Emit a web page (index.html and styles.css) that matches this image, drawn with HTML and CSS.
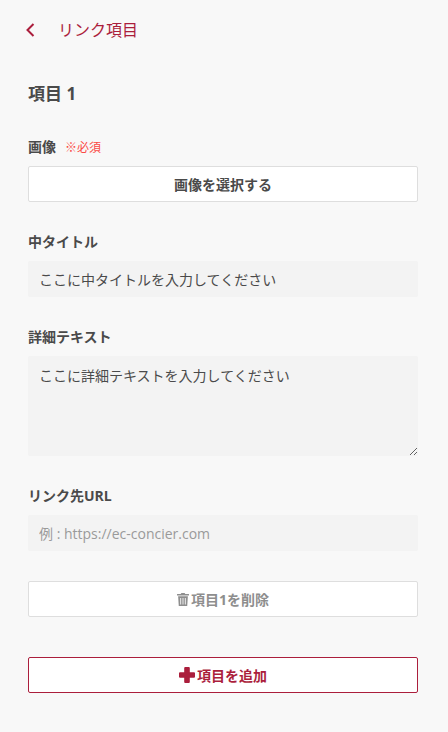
FILE: index.html
```html
<!DOCTYPE html>
<html lang="ja">
<head>
<meta charset="utf-8">
<title>リンク項目</title>
<link rel="stylesheet" href="styles.css">
</head>
<body>
<header class="topbar">
  <svg class="back" width="10" height="14" viewBox="0 0 10 14"><path d="M8.500 1 2.500 7 8.500 13" fill="none" stroke="#ab1e3c" stroke-width="2"/></svg>
  <span class="top-title">リンク項目</span>
</header>
<main class="content">
  <h2 class="item-title">項目 1</h2>
  <div class="field f-image">
    <div class="label">画像<span class="req">※必須</span></div>
    <button class="btn">画像を選択する</button>
  </div>
  <div class="field">
    <div class="label">中タイトル</div>
    <input class="input" value="ここに中タイトルを入力してください">
  </div>
  <div class="field">
    <div class="label">詳細テキスト</div>
    <textarea class="input area">ここに詳細テキストを入力してください</textarea>
  </div>
  <div class="field">
    <div class="label">リンク先URL</div>
    <input class="input" placeholder="例 : https://ec-concier.com">
  </div>
  <button class="btn del">
    <svg width="12" height="13" viewBox="0 0 11 12"><path fill="#8e8e8e" d="M4 0h3l.6 1H11v1.300H0V1h3.400zM1 3h9l-.6 9H1.600zM3 4.500v6h.8v-6zm2.100 0v6h.8v-6zm2.100 0v6h.8v-6z" fill-rule="evenodd"/></svg>
    項目1を削除
  </button>
  <button class="btn add">
    <svg width="16" height="16" viewBox="0 0 16 16"><path fill="#ab1e3c" d="M5.200 1a1 1 0 0 1 1-1h3.600a1 1 0 0 1 1 1v4.200H15a1 1 0 0 1 1 1v3.600a1 1 0 0 1-1 1h-4.200V15a1 1 0 0 1-1 1H6.200a1 1 0 0 1-1-1v-4.200H1a1 1 0 0 1-1-1V6.200a1 1 0 0 1 1-1h4.200z"/></svg>
    項目を追加
  </button>
</main>
</body>
</html>
```
FILE: styles.css
```css
* { box-sizing: border-box; }
html, body { margin: 0; padding: 0; }
body {
  width: 448px;
  height: 732px;
  overflow: hidden;
  background: #f8f8f8;
  color: #4a4a4a;
  font-family: "Open Sans", "Noto Sans CJK JP", sans-serif;
  font-size: 14px;
}
.topbar {
  display: flex;
  align-items: center;
  height: 59px;
  padding-left: 25px;
  color: #ab1e3c;
  font-size: 16px;
}
.back { margin-right: 23px; }
.top-title { line-height: 20px; }
.content { padding: 0 30px 0 28px; }
.item-title {
  margin: 25px 0 0;
  font-size: 17px;
  line-height: 20px;
  font-weight: 700;
}
.field { margin-top: 31px; }
.f-image { margin-top: 34px; }
.f-image .label { margin-bottom: 9px; }
.label {
  font-size: 14px;
  font-weight: 700;
  line-height: 18px;
  margin-bottom: 10px;
}
.req {
  margin-left: 9px;
  color: #fb4a44;
  font-size: 12px;
  font-weight: 400;
}
.btn {
  display: flex;
  align-items: center;
  justify-content: center;
  gap: 3px;
  width: 100%;
  height: 36px;
  background: #fff;
  border: 1px solid #dedede;
  border-radius: 2px;
  color: #4a4a4a;
  font: 700 14px "Open Sans", "Noto Sans CJK JP", sans-serif;
  padding: 0;
}
.input {
  display: block;
  width: 100%;
  height: 36px;
  padding: 0 11px;
  background: #f3f3f3;
  border: 0;
  border-radius: 2px;
  color: #4a4a4a;
  font: 400 14px "Open Sans", "Noto Sans CJK JP", sans-serif;
  outline: none;
}
.input::placeholder { color: #9a9a9a; }
.area {
  height: 100px;
  padding: 10px 11px;
  line-height: 20px;
  resize: vertical;
}
.del { margin-top: 30px; color: #8e8e8e; gap: 2px; }
.add { margin-top: 40px; color: #ab1e3c; border-color: #ab1e3c; gap: 2px; }
```
